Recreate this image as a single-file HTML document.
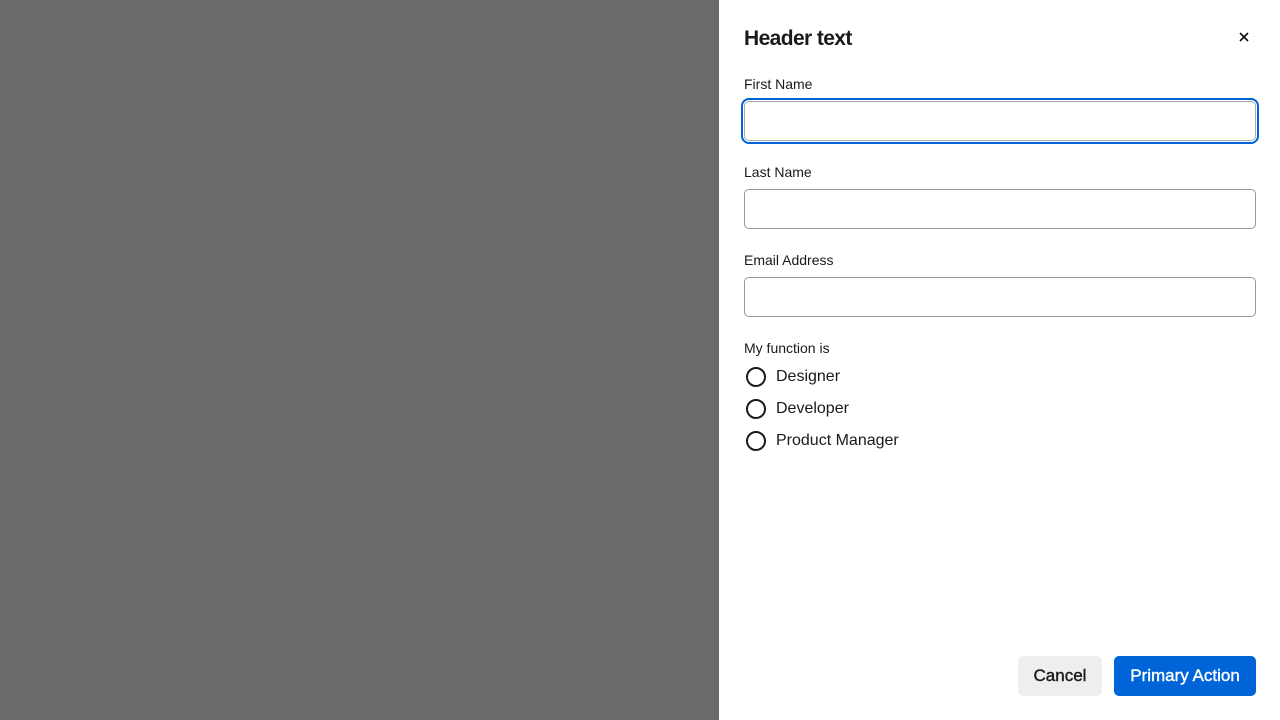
<!DOCTYPE html>
<html><head><style>
*{box-sizing:border-box;margin:0;padding:0}
body{width:1280px;height:720px;background:#6a6a6a;font-family:"Liberation Sans",sans-serif;position:relative;overflow:hidden;color:#1a1a1a}
.panel{position:absolute;left:719px;top:0;width:561px;height:720px;background:#fff}
.a{position:absolute}
h1{position:absolute;left:25px;top:27px;font-size:21px;font-weight:bold;letter-spacing:-0.6px}
.lbl{position:absolute;left:25px;font-size:14px}
.inp{position:absolute;left:25px;width:512px;height:40px;border:1px solid #999;border-radius:5px}
.foc{outline:2px solid #0064d9;outline-offset:1px;border-color:#aaa}
.rad{position:absolute;left:27px;width:20px;height:20px;border:2px solid #1a1a1a;border-radius:50%}
.rt{position:absolute;left:57px;font-size:16px}
.btn{position:absolute;top:656px;height:40px;border-radius:5px;font-size:17px;text-align:center;line-height:40px;-webkit-text-stroke:0.4px currentColor}
</style></head><body>
<div class="panel">
<h1>Header text</h1>
<svg class="a" style="left:520px;top:32px" width="10" height="10" viewBox="0 0 10 10"><path d="M1 1L9 9M9 1L1 9" stroke="#111" stroke-width="1.6"/></svg>
<div class="lbl" style="top:76px">First Name</div>
<div class="inp foc" style="top:101px"></div>
<div class="lbl" style="top:164px">Last Name</div>
<div class="inp" style="top:189px"></div>
<div class="lbl" style="top:252px">Email Address</div>
<div class="inp" style="top:277px"></div>
<div class="lbl" style="top:340px">My function is</div>
<div class="rad" style="top:367px"></div><div class="rt" style="top:368px">Designer</div>
<div class="rad" style="top:399px"></div><div class="rt" style="top:400px">Developer</div>
<div class="rad" style="top:431px"></div><div class="rt" style="top:432px">Product Manager</div>
<div class="btn" style="left:299px;width:84px;background:#eee;color:#1a1a1a">Cancel</div>
<div class="btn" style="left:395px;width:142px;background:#0064d9;color:#fff">Primary Action</div>
</div>
</body></html>
